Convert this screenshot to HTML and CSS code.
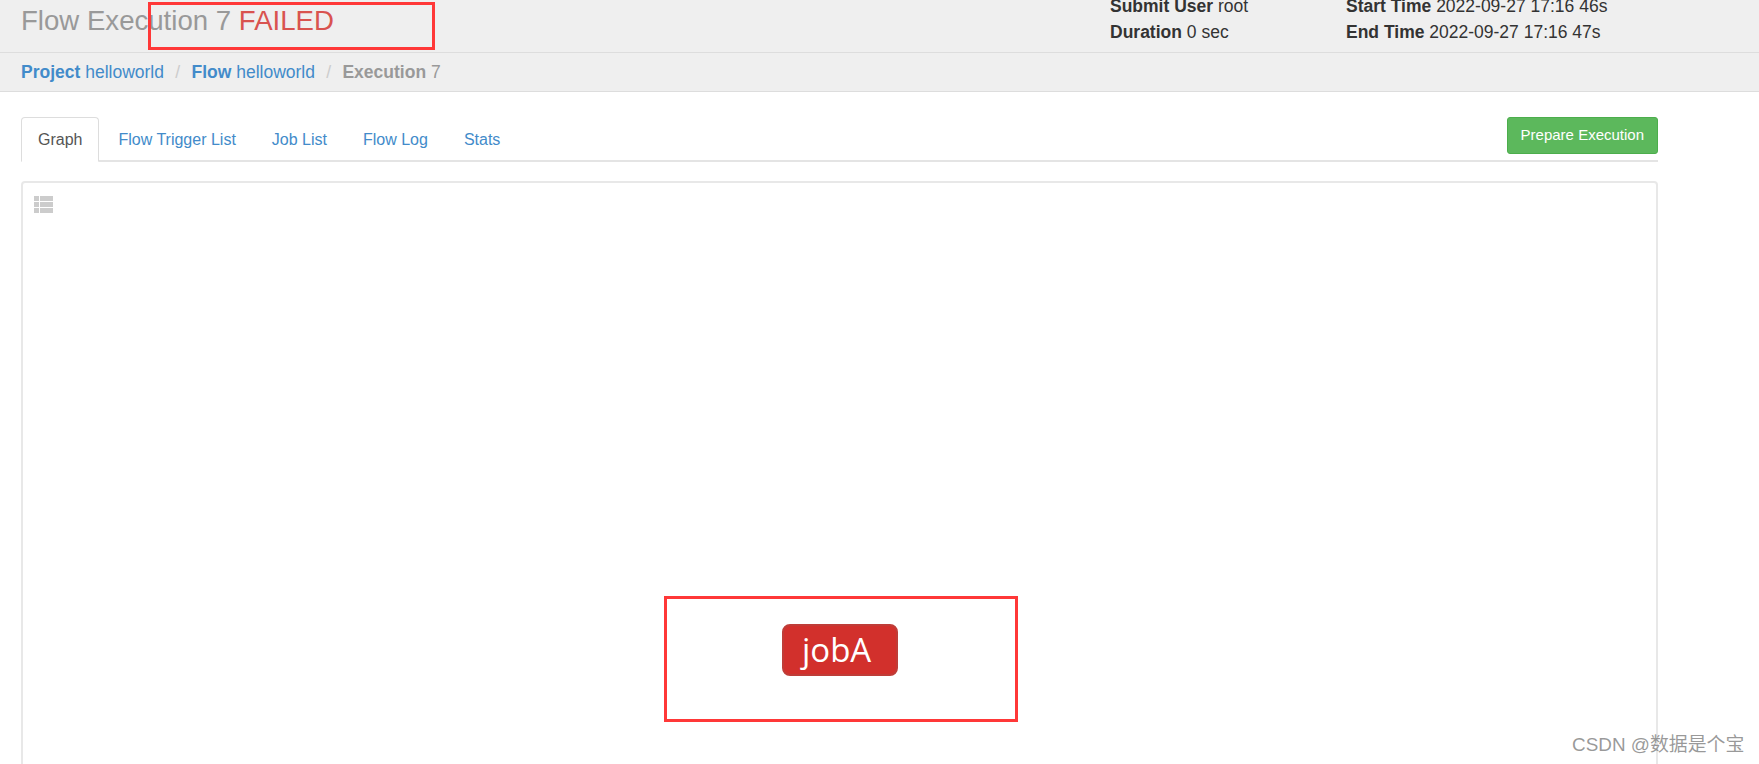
FILE: index.html
```html
<!DOCTYPE html>
<html lang="en">
<head>
  <meta charset="UTF-8" />
  <title>Flow Execution 7</title>
  <link rel="stylesheet" href="styles.css">
</head>
<body>

  <div class="flow-header">
    <h1 class="flow-title">Flow Execution 7 <span class="status-failed">FAILED</span></h1>
    <div class="flow-meta">
      <div><strong>Submit User</strong> root</div>
      <div><strong>Start Time</strong> 2022-09-27 17:16 46s</div>
      <div><strong>Duration</strong> 0 sec</div>
      <div><strong>End Time</strong> 2022-09-27 17:16 47s</div>
    </div>
  </div>

  <div class="crumbs">
    <a href="#"><strong>Project</strong> helloworld</a>
    <span class="crumb-sep">/</span>
    <a href="#"><strong>Flow</strong> helloworld</a>
    <span class="crumb-sep">/</span>
    <span class="crumb-active"><strong>Execution</strong> 7</span>
  </div>

  <div class="content">
    <div class="tabs">
      <a class="tab active" href="#">Graph</a>
      <a class="tab" href="#">Flow Trigger List</a>
      <a class="tab" href="#">Job List</a>
      <a class="tab" href="#">Flow Log</a>
      <a class="tab" href="#">Stats</a>
      <button class="btn-prepare">Prepare Execution</button>
    </div>

    <div class="graph-panel">
      <svg class="list-icon" width="19" height="17" viewBox="0 0 19 17">
        <rect x="0" y="0" width="5" height="5" />
        <rect x="6" y="0" width="13" height="5" />
        <rect x="0" y="6" width="5" height="5" />
        <rect x="6" y="6" width="13" height="5" />
        <rect x="0" y="12" width="5" height="5" />
        <rect x="6" y="12" width="13" height="5" />
      </svg>
      <div class="job-node">jobA</div>
    </div>
  </div>

  <!-- hand drawn highlights on top of the screenshot -->
  <div class="mark mark-title"></div>
  <div class="mark mark-job"></div>
  <div class="watermark">CSDN @数据是个宝</div>

</body>
</html>
```

FILE: styles.css
```css
* {
  margin: 0;
  padding: 0;
  box-sizing: border-box;
}

html, body {
  height: 100%;
  overflow: hidden;
}

body {
  position: relative;
  background: #fff;
  color: #333;
  font-family: "Liberation Sans", Arial, sans-serif;
  font-size: 16px;
}

a {
  color: #428bca;
  text-decoration: none;
}

/* === Header === */
.flow-header {
  display: flex;
  align-items: flex-end;
  justify-content: space-between;
  height: 53px;
  padding: 0 176px 0 21px;
  overflow: hidden;
  background: #efefef;
  border-bottom: 1px solid #ddd;
}

.flow-title {
  padding-bottom: 16px;
  color: #999;
  font-size: 27.6px;
  font-weight: normal;
  line-height: 30px;
}

.status-failed {
  color: #d9534f;
}

.flow-meta {
  display: grid;
  grid-template-columns: 236px 237px;
  padding-bottom: 7px;
  font-size: 17.5px;
  line-height: 26px;
  white-space: nowrap;
}

/* === Breadcrumb === */
.crumbs {
  display: flex;
  align-items: center;
  gap: 11.3px;
  height: 39px;
  padding-left: 21px;
  background: #efefef;
  border-bottom: 1px solid #ddd;
  font-size: 17.5px;
}

.crumb-sep {
  color: #ccc;
}

.crumb-active {
  color: #999;
}

/* === Tabs === */
.content {
  padding: 25px 101px 0 21px;
}

.tabs {
  display: flex;
  align-items: flex-start;
  height: 45px;
  border-bottom: 2px solid #e4e4e4;
}

.tab {
  height: 45px;
  padding: 12px 16px;
  border: 1px solid transparent;
  border-radius: 4px 4px 0 0;
  font-size: 16px;
  line-height: 20px;
  margin-right: 2px;
}

.tab.active {
  padding-bottom: 13px;
  background: #fff;
  color: #555;
  border-color: #ddd #ddd #fff;
}

.btn-prepare {
  height: 37px;
  margin-left: auto;
  padding: 0 13px 2px;
  color: #fff;
  background: #5cb85c;
  border: 1px solid #4cae4c;
  border-radius: 3px;
  font-family: inherit;
  font-size: 15px;
}

/* === Graph === */
.graph-panel {
  position: relative;
  height: 620px;
  margin-top: 19px;
  border: 2px solid #e8e8e8;
  border-radius: 4px;
}

.list-icon {
  display: block;
  margin: 13px 0 0 11px;
  fill: #ccc;
}

.job-node {
  position: absolute;
  left: 759px;
  top: 441px;
  width: 116px;
  height: 52px;
  padding-left: 18px;
  color: #fff;
  background: #d2302c;
  border: 2px solid #bf3d38;
  border-radius: 8px;
  font-family: "Open Sans", sans-serif;
  font-size: 33px;
  line-height: 48px;
}

/* === Overlays === */
.mark {
  position: absolute;
  border: 3px solid #ff3838;
}

.mark-title {
  left: 148px;
  top: 2px;
  width: 287px;
  height: 48px;
}

.mark-job {
  left: 664px;
  top: 596px;
  width: 354px;
  height: 126px;
}

.watermark {
  position: absolute;
  left: 1572px;
  top: 733px;
  color: rgba(120, 120, 120, 0.75);
  font-family: "Liberation Sans", "Noto Sans CJK SC", sans-serif;
  font-size: 18.9px;
  line-height: 24px;
  white-space: nowrap;
}
```
